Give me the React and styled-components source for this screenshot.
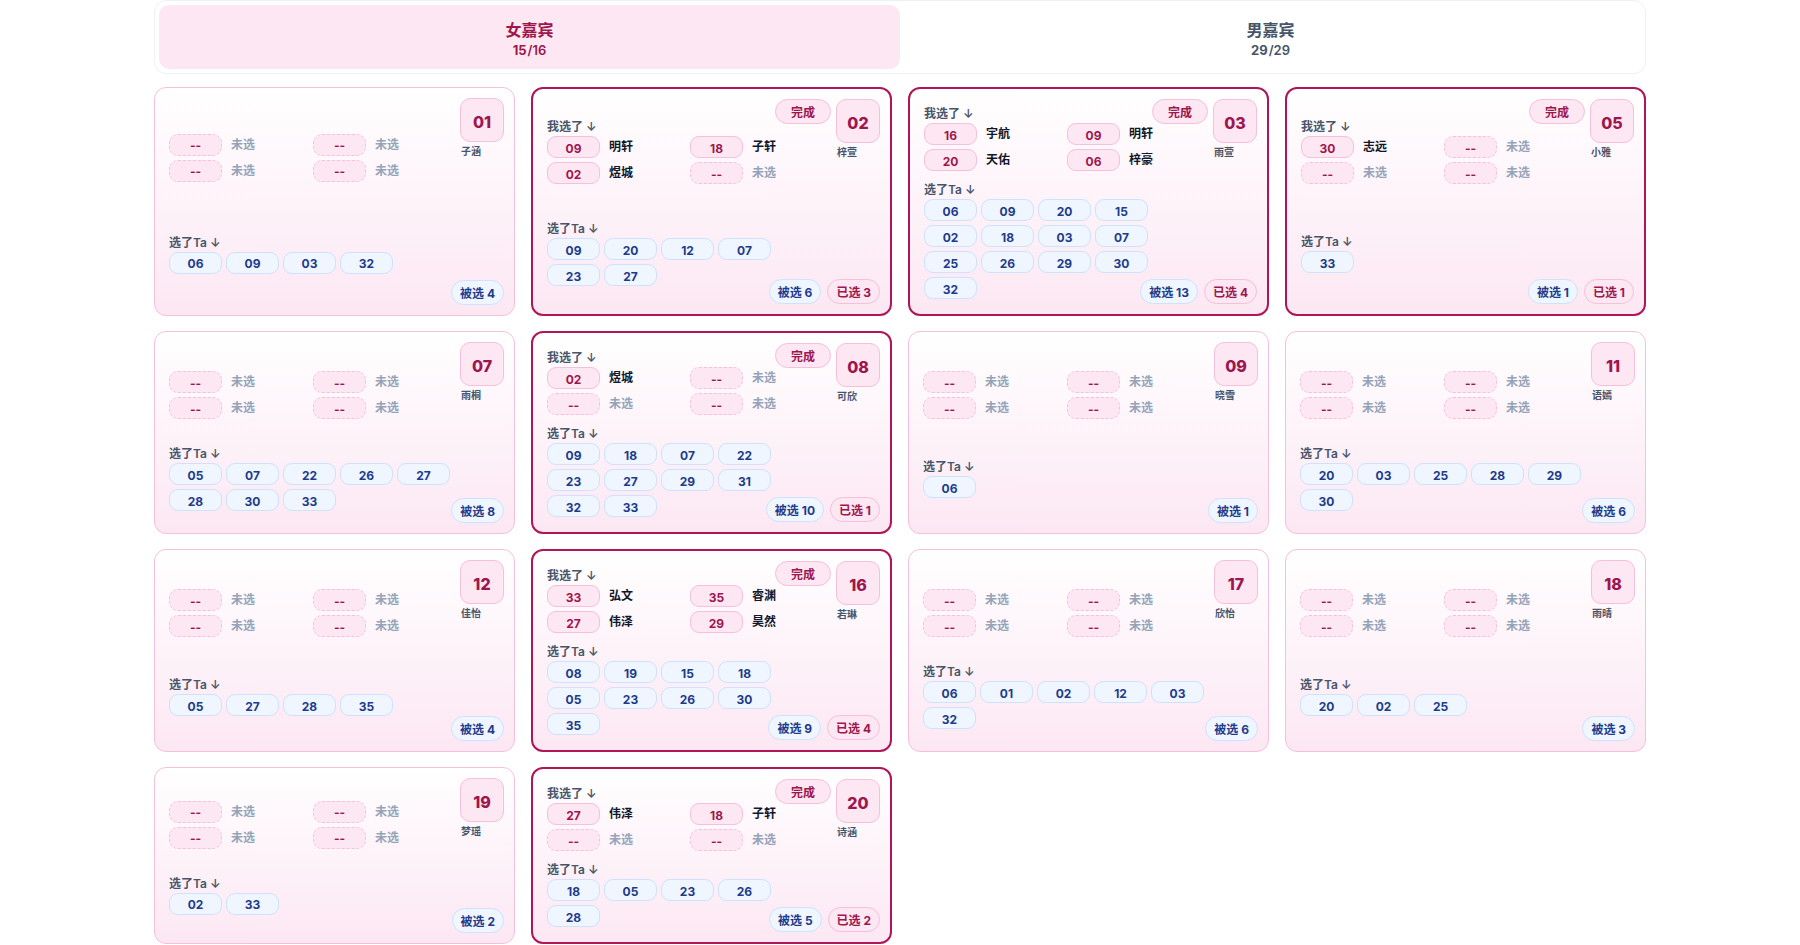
import React, { useState } from "react";
import styled, { createGlobalStyle, css } from "styled-components";

const GlobalStyle = createGlobalStyle`
  *, *::before, *::after { box-sizing: border-box; }
  body {
    margin: 0;
    background: #ffffff;
    color: #0f172a;
    font-family: Inter, "Noto Sans CJK SC", sans-serif;
  }
`;

const Page = styled.main`
  width: calc(100% - 32px);
  max-width: 1492px;
  margin: 0 auto;
`;

const Tabs = styled.div`
  display: grid;
  grid-template-columns: 1fr 1fr;
  padding: 4px;
  margin-bottom: 13px;
  border: 1px solid #edf1f6;
  border-radius: 12px;
  background: #ffffff;
`;

const Tab = styled.button`
  display: flex;
  flex-direction: column;
  align-items: center;
  justify-content: center;
  height: 64px;
  padding: 4px 0 0;
  border: 0;
  border-radius: 10px;
  font: inherit;
  cursor: pointer;
  background: ${(p) => (p.$active ? "#fce7f3" : "transparent")};
  color: ${(p) => (p.$active ? "#9d174d" : "#475569")};
`;

const TabTitle = styled.span`
  font-size: 16px;
  line-height: 22px;
  font-weight: 700;
`;

const TabCount = styled.span`
  display: flex;
  gap: 1px;
  font-size: 13px;
  line-height: 18px;
  font-weight: 600;

  strong { font-weight: 700; }
`;

const Grid = styled.div`
  display: grid;
  grid-template-columns: repeat(4, minmax(0, 1fr));
  gap: 15px 16px;

  @media (max-width: 1300px) {
    grid-template-columns: repeat(auto-fill, minmax(340px, 1fr));
  }
`;

const CardBox = styled.article`
  position: relative;
  display: grid;
  padding: 14px 14px 15px;
  border: ${(p) => (p.$done ? "2px solid #b01657" : "1px solid #f6bfda")};
  border-radius: 12px;
  background: linear-gradient(180deg, #ffffff 0%, #fce7f3 100%) border-box;
`;

const Content = styled.div`
  display: flex;
  flex-direction: column;
  gap: 8px;
  padding-right: 49px;
`;

const Section = styled.section`
  flex: 1 1 0px;
  display: flex;
  flex-direction: column;
  justify-content: center;
`;

const Label = styled.h3`
  margin: 0;
  height: 20px;
  font-size: 12px;
  line-height: 22px;
  font-weight: 600;
  color: #475569;
`;

const Picks = styled.div`
  display: grid;
  grid-template-columns: 1fr 1fr;
  gap: 4px 6px;
  padding-top: ${(p) => (p.$unlabelled ? "16px" : "0")};
`;

const Pick = styled.div`
  display: flex;
  align-items: center;
  gap: 9px;
`;

const PickName = styled.span`
  font-size: 12px;
  line-height: 20px;
  font-weight: 600;
  color: ${(p) => (p.$empty ? "#94a3b8" : "#0f172a")};
`;

const pink = css`
  border: 1px solid #f6bfda;
  background: #fce7f3;
  color: #9d174d;
`;

const blue = css`
  border: 1px solid #cfe2fb;
  background: #eff6ff;
  color: #1e3a8a;
`;

const Chip = styled.span`
  ${(p) => (p.$blue ? blue : pink)}
  display: flex;
  align-items: center;
  justify-content: center;
  width: 53px;
  height: 22px;
  padding-top: 3px;
  border-style: ${(p) => (p.$empty ? "dashed" : "solid")};
  border-radius: 9px;
  font-size: 12px;
  line-height: 18px;
  font-weight: 700;
`;

const Chips = styled.div`
  display: flex;
  flex-wrap: wrap;
  gap: 4px;
`;

const Corner = styled.div`
  position: absolute;
  top: 10px;
  right: 10px;
  display: flex;
  align-items: flex-start;
  gap: 5px;
`;

const Footer = styled.div`
  position: absolute;
  right: 10px;
  bottom: 10px;
  display: flex;
  gap: 6px;
`;

const NumberBox = styled.div`
  ${pink}
  display: flex;
  align-items: center;
  justify-content: center;
  width: 44px;
  height: 44px;
  padding-top: 4px;
  border-radius: 10px;
  font-size: 16px;
  line-height: 20px;
  font-weight: 800;
`;

const GuestName = styled.div`
  margin-top: 2px;
  padding-left: 1px;
  font-size: 10px;
  line-height: 14px;
  font-weight: 600;
  color: #475569;
`;

const badge = css`
  display: flex;
  align-items: center;
  height: 25px;
  padding: 2px 8px 0;
  border-radius: 999px;
  font-size: 12px;
  line-height: 18px;
  font-weight: 700;
  white-space: nowrap;
`;

const Badge = styled.span`
  ${(p) => (p.$blue ? blue : pink)}
  ${badge}
`;

const DoneButton = styled.button`
  ${pink}
  ${badge}
  padding: 2px 15px 0;
  font-family: inherit;
  cursor: pointer;
`;

const women = [
  { id: "01", name: "子涵", picks: [], by: ["06", "09", "03", "32"] },
  { id: "02", name: "梓萱", picks: [["09", "明轩"], ["18", "子轩"], ["02", "煜城"]], by: ["09", "20", "12", "07", "23", "27"] },
  { id: "03", name: "雨萱", picks: [["16", "宇航"], ["09", "明轩"], ["20", "天佑"], ["06", "梓豪"]], by: ["06", "09", "20", "15", "02", "18", "03", "07", "25", "26", "29", "30", "32"] },
  { id: "05", name: "小雅", picks: [["30", "志远"]], by: ["33"] },
  { id: "07", name: "雨桐", picks: [], by: ["05", "07", "22", "26", "27", "28", "30", "33"] },
  { id: "08", name: "可欣", picks: [["02", "煜城"]], by: ["09", "18", "07", "22", "23", "27", "29", "31", "32", "33"] },
  { id: "09", name: "晓雪", picks: [], by: ["06"] },
  { id: "11", name: "语嫣", picks: [], by: ["20", "03", "25", "28", "29", "30"] },
  { id: "12", name: "佳怡", picks: [], by: ["05", "27", "28", "35"] },
  { id: "16", name: "若琳", picks: [["33", "弘文"], ["35", "睿渊"], ["27", "伟泽"], ["29", "昊然"]], by: ["08", "19", "15", "18", "05", "23", "26", "30", "35"] },
  { id: "17", name: "欣怡", picks: [], by: ["06", "01", "02", "12", "03", "32"] },
  { id: "18", name: "雨晴", picks: [], by: ["20", "02", "25"] },
  { id: "19", name: "梦瑶", picks: [], by: ["02", "33"] },
  { id: "20", name: "诗涵", picks: [["27", "伟泽"], ["18", "子轩"]], by: ["18", "05", "23", "26", "28"] },
];

const SLOTS = [0, 1, 2, 3];

function GuestCard({ guest }) {
  const done = guest.picks.length > 0;
  return (
    <CardBox $done={done}>
      <Content>
        <Section>
          {done && <Label>我选了 ↓</Label>}
          <Picks $unlabelled={!done}>
            {SLOTS.map((slot) => {
              const [number, name] = guest.picks[slot] || ["--", "未选"];
              const empty = !guest.picks[slot];
              return (
                <Pick key={slot}>
                  <Chip $empty={empty}>{number}</Chip>
                  <PickName $empty={empty}>{name}</PickName>
                </Pick>
              );
            })}
          </Picks>
        </Section>
        <Section>
          <Label>选了Ta ↓</Label>
          <Chips>
            {guest.by.map((n) => (
              <Chip key={n} $blue>{n}</Chip>
            ))}
          </Chips>
        </Section>
      </Content>
      <Corner>
        {done && <DoneButton type="button">完成</DoneButton>}
        <div>
          <NumberBox>{guest.id}</NumberBox>
          <GuestName>{guest.name}</GuestName>
        </div>
      </Corner>
      <Footer>
        <Badge $blue>被选 {guest.by.length}</Badge>
        {done && <Badge>已选 {guest.picks.length}</Badge>}
      </Footer>
    </CardBox>
  );
}

const tabs = [
  { key: "women", title: "女嘉宾", count: 15, total: 16 },
  { key: "men", title: "男嘉宾", count: 29, total: 29 },
];

export default function App() {
  const [active, setActive] = useState("women");
  return (
    <>
      <GlobalStyle />
      <Page>
        <Tabs role="tablist">
          {tabs.map((t) => (
            <Tab
              key={t.key}
              type="button"
              role="tab"
              aria-selected={active === t.key}
              $active={active === t.key}
              onClick={() => setActive(t.key)}
            >
              <TabTitle>{t.title}</TabTitle>
              <TabCount>
                <strong>{t.count}</strong>
                <span>/{t.total}</span>
              </TabCount>
            </Tab>
          ))}
        </Tabs>
        <Grid>
          {women.map((g) => (
            <GuestCard key={g.id} guest={g} />
          ))}
        </Grid>
      </Page>
    </>
  );
}
